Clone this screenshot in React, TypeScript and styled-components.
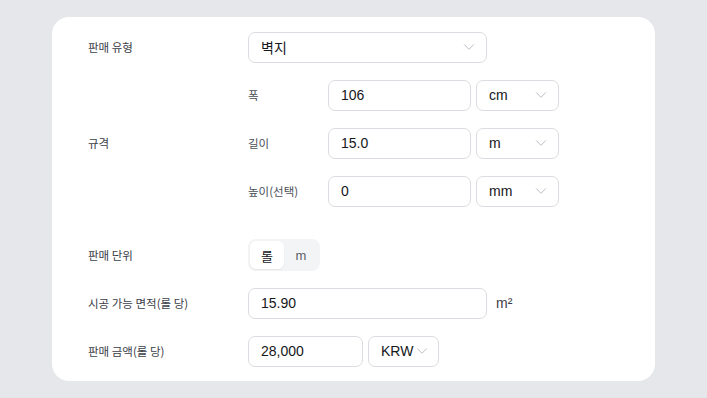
import React from "react";
import styled, { createGlobalStyle } from "styled-components";
import { ChevronDown } from "lucide-react";

const Global = createGlobalStyle`
  * { box-sizing: border-box; }
  html, body { margin: 0; padding: 0; }
  body {
    background: #e5e7ea;
    font-family: "Liberation Sans", "Noto Sans CJK KR", sans-serif;
    color: #111;
  }
`;

const Page = styled.div`
  min-height: 100vh;
  display: flex;
  align-items: center;
  justify-content: center;
`;

const Card = styled.div`
  width: 603px;
  background: #fff;
  border-radius: 17px;
  padding: 6px 36px;
  display: grid;
  grid-template-columns: 160px 1fr;
`;

const Label = styled.div<{ $pad?: number }>`
  font-size: 11.5px;
  color: #3b4048;
  display: flex;
  align-items: center;
  padding-bottom: ${(p) => p.$pad ?? 0}px;
  font-family: "Noto Sans CJK KR", sans-serif;
`;

const Cell = styled.div<{ $pad?: number }>`
  display: flex;
  flex-direction: column;
  padding-bottom: ${(p) => p.$pad ?? 0}px;
`;

const Line = styled.div`
  height: 48px;
  display: flex;
  align-items: center;
  gap: 5px;
`;

const SubLabel = styled.div`
  width: 75px;
  font-size: 11.5px;
  color: #4a4f57;
  font-family: "Noto Sans CJK KR", sans-serif;
`;

const Box = styled.div<{ $w: number }>`
  width: ${(p) => p.$w}px;
  height: 31px;
  border: 1px solid #dadde1;
  border-radius: 7px;
  display: flex;
  align-items: center;
  justify-content: space-between;
  padding: 0 8px 0 12px;
  font-size: 14px;
  color: #15171a;
  background: #fff;
`;

const Chevron = styled(ChevronDown)`
  color: #b9bdc4;
  flex-shrink: 0;
`;

const Unit = styled.span`
  font-size: 14px;
  color: #3b4048;
  margin-left: 4px;
`;

const Toggle = styled.div`
  display: flex;
  background: #f3f4f6;
  border-radius: 8px;
  padding: 2px;
  height: 32px;
`;

const ToggleBtn = styled.div<{ $on?: boolean }>`
  width: 34px;
  display: flex;
  align-items: center;
  justify-content: center;
  font-size: 13px;
  border-radius: 6px;
  background: ${(p) => (p.$on ? "#fff" : "transparent")};
  color: ${(p) => (p.$on ? "#15171a" : "#5c6168")};
  box-shadow: ${(p) => (p.$on ? "0 1px 2px rgba(0,0,0,0.06)" : "none")};
`;

const Select = ({ w, children }: { w: number; children: React.ReactNode }) => (
  <Box $w={w}>
    <span>{children}</span>
    <Chevron size={18} strokeWidth={1.3} />
  </Box>
);

export default function App() {
  return (
    <>
      <Global />
      <Page>
        <Card>
          <Label>판매 유형</Label>
          <Line>
            <Select w={239}>벽지</Select>
          </Line>

          <Label $pad={16}>규격</Label>
          <Cell $pad={16}>
            <Line>
              <SubLabel>폭</SubLabel>
              <Box $w={143}>106</Box>
              <Select w={83}>cm</Select>
            </Line>
            <Line>
              <SubLabel>길이</SubLabel>
              <Box $w={143}>15.0</Box>
              <Select w={83}>m</Select>
            </Line>
            <Line>
              <SubLabel>높이(선택)</SubLabel>
              <Box $w={143}>0</Box>
              <Select w={83}>mm</Select>
            </Line>
          </Cell>

          <Label>판매 단위</Label>
          <Line>
            <Toggle>
              <ToggleBtn $on>롤</ToggleBtn>
              <ToggleBtn>m</ToggleBtn>
            </Toggle>
          </Line>

          <Label>시공 가능 면적(롤 당)</Label>
          <Line>
            <Box $w={239}>15.90</Box>
            <Unit>m²</Unit>
          </Line>

          <Label>판매 금액(롤 당)</Label>
          <Line>
            <Box $w={115}>28,000</Box>
            <Select w={71}>KRW</Select>
          </Line>
        </Card>
      </Page>
    </>
  );
}
